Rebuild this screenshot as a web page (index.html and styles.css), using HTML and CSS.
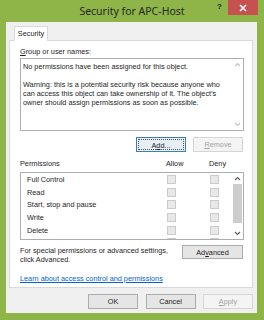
FILE: index.html
```html
<!DOCTYPE html>
<html lang="en">
  <head>
    <meta charset="utf-8">
    <title>Security for APC-Host</title>
    <link rel="stylesheet" href="styles.css">
  </head>
  <body>
    <div class="window">
      <div class="titlebar">
        <span></span>
        <div class="title">Security for APC-Host</div>
        <div class="window-controls">
          <span class="help">?</span>
          <button class="close-btn">
            <svg width="8" height="8" viewBox="0 0 8 8"><path d="M1 1L7 7M7 1L1 7" stroke="#fff" stroke-width="1.6"/></svg>
          </button>
        </div>
      </div>

      <div class="client">
        <div class="tabs">
          <div class="tab">Security</div>
        </div>

        <div class="panel">
          <div class="label"><u>G</u>roup or user names:</div>
          <div class="list-box names-box">
            <div class="names-text">
              <p>No permissions have been assigned for this object.</p>
              <p>Warning: this is a potential security risk because anyone who can access this object can take ownership of it. The object’s owner should assign permissions as soon as possible.</p>
            </div>
            <div class="vscroll">
              <div class="arrow"><svg width="7" height="5" viewBox="0 0 7 5"><path d="M1 4L3.5 1.5L6 4" fill="none" stroke="#c4c4c4" stroke-width="1.2"/></svg></div>
              <div class="track"></div>
              <div class="arrow"><svg width="7" height="5" viewBox="0 0 7 5"><path d="M1 1L3.5 3.5L6 1" fill="none" stroke="#c4c4c4" stroke-width="1.2"/></svg></div>
            </div>
          </div>

          <div class="btn-row">
            <button class="btn focused"><span class="focus-rect">A<u>d</u>d...</span></button>
            <button class="btn" disabled><u>R</u>emove</button>
          </div>

          <div class="perm-head">
            <span>Permissions</span>
            <span>Allow</span>
            <span>Deny</span>
          </div>
          <div class="list-box perm-box">
            <div class="perm-rows">
              <div class="perm-row"><span>Full Control</span><i class="check"></i><i class="check"></i></div>
              <div class="perm-row"><span>Read</span><i class="check"></i><i class="check"></i></div>
              <div class="perm-row"><span>Start, stop and pause</span><i class="check"></i><i class="check"></i></div>
              <div class="perm-row"><span>Write</span><i class="check"></i><i class="check"></i></div>
              <div class="perm-row"><span>Delete</span><i class="check"></i><i class="check"></i></div>
              <div class="perm-row"><span></span><i class="check"></i><i class="check"></i></div>
            </div>
            <div class="vscroll">
              <div class="arrow"><svg width="7" height="5" viewBox="0 0 7 5"><path d="M1 4L3.5 1.5L6 4" fill="none" stroke="#606060" stroke-width="1.2"/></svg></div>
              <div class="track"><div class="thumb"></div></div>
              <div class="arrow"><svg width="7" height="5" viewBox="0 0 7 5"><path d="M1 1L3.5 3.5L6 1" fill="none" stroke="#606060" stroke-width="1.2"/></svg></div>
            </div>
          </div>

          <div class="adv-row">
            <p>For special permissions or advanced settings,<br>click Advanced.</p>
            <button class="btn adv-btn">Ad<u>v</u>anced</button>
          </div>

          <a class="learn" href="#">Learn about access control and permissions</a>
        </div>

        <div class="footer">
          <button class="btn">OK</button>
          <button class="btn">Cancel</button>
          <button class="btn" disabled><u>A</u>pply</button>
        </div>
      </div>
    </div>
  </body>
</html>
```

FILE: styles.css
```css
body {
  margin: 0;
  padding: 0;
  font-family: "Liberation Sans", Arial, sans-serif;
  font-size: 7.3px;
  line-height: 9px;
  color: #1e1e1e;
}

p {
  margin: 0;
}

.window {
  width: 264px;
  height: 320px;
  background: #8fb548;
  display: flex;
  flex-direction: column;
}

/* Title bar */
.titlebar {
  height: 22px;
  display: grid;
  grid-template-columns: 1fr auto 1fr;
  align-items: start;
}

.title {
  font-family: "Noto Sans", sans-serif;
  font-size: 10.5px;
  line-height: 22px;
  color: #262626;
}

.window-controls {
  display: flex;
  justify-self: end;
  margin-right: 6px;
}

.help {
  font-size: 8px;
  font-weight: bold;
  line-height: 14px;
  color: #222;
  margin-right: 6px;
}

.close-btn {
  width: 30px;
  height: 15px;
  border: none;
  padding: 0;
  background: #c75050;
  display: flex;
  justify-content: center;
  align-items: center;
}

/* Client area */
.client {
  flex: 1;
  margin: 0 7px 7px 6px;
  background: #f0f0f0;
  padding: 4px 4px 4px 3px;
  display: flex;
  flex-direction: column;
}

.tabs {
  display: flex;
  padding-left: 5px;
  height: 14px;
  position: relative;
  z-index: 1;
}

.tab {
  width: 34px;
  height: 15px;
  box-sizing: border-box;
  background: #fff;
  border: 1px solid #d9d9d9;
  border-bottom: none;
  text-align: center;
  line-height: 13px;
}

.panel {
  height: 248px;
  box-sizing: border-box;
  background: #fff;
  border: 1px solid #d9d9d9;
  padding: 6px 8px 0 10px;
  display: flex;
  flex-direction: column;
}

.label {
  line-height: 10px;
}

.list-box {
  display: flex;
  border: 1px solid #abadb3;
  background: #fff;
}

.names-box {
  margin-top: 1px;
  height: 73px;
  box-sizing: border-box;
}

.names-text {
  flex: 1;
  padding: 3px 2px;
}

.names-text p + p {
  margin-top: 9px;
}

.vscroll {
  width: 12px;
  display: flex;
  flex-direction: column;
}

.arrow {
  height: 11px;
  display: flex;
  justify-content: center;
  align-items: center;
}

.track {
  flex: 1;
  display: flex;
  justify-content: center;
}

.thumb {
  width: 9px;
  height: 39px;
  background: #cdcdcd;
}

/* Buttons */
.btn {
  height: 15px;
  width: 50px;
  box-sizing: border-box;
  border: 1px solid #acacac;
  background: #e5e5e5;
  font-family: inherit;
  font-size: 7.3px;
  line-height: 11px;
  color: #1e1e1e;
  padding: 0;
}

.btn:disabled {
  background: #f4f4f4;
  border-color: #d5d5d5;
  color: #a3a3a3;
}

.btn.focused {
  border-color: #3c7fb1;
  background: #e6eef6;
  padding: 1px;
}

.focus-rect {
  display: block;
  height: 100%;
  box-sizing: border-box;
  border: 1px dotted #555;
}

.btn-row {
  margin-top: 6px;
  padding-right: 1px;
  display: flex;
  justify-content: flex-end;
  gap: 7px;
}

/* Permissions */
.perm-head {
  margin-top: 7px;
  display: grid;
  grid-template-columns: 146px 43px auto;
  line-height: 10px;
}

.perm-box {
  margin-top: 3px;
  height: 68px;
  box-sizing: border-box;
  overflow: hidden;
}

.perm-rows {
  flex: 1;
}

.perm-row {
  height: 12.7px;
  padding-left: 6px;
  display: grid;
  grid-template-columns: 140px 43px 9px;
  align-items: center;
}

.check {
  width: 9px;
  height: 9px;
  box-sizing: border-box;
  border: 1px solid #cbcbcb;
  background: #e8e8e8;
}

.adv-row {
  margin-top: 5px;
  display: flex;
  justify-content: space-between;
  align-items: flex-start;
  padding-right: 1px;
}

.adv-row p {
  padding-top: 1px;
}

.adv-btn {
  width: 61px;
  height: 14px;
}

.learn {
  margin-top: 10px;
  line-height: 10px;
  color: #0066cc;
}

/* Dialog buttons */
.footer {
  margin-top: 6px;
  display: flex;
  justify-content: flex-end;
  gap: 7.5px;
}
```
